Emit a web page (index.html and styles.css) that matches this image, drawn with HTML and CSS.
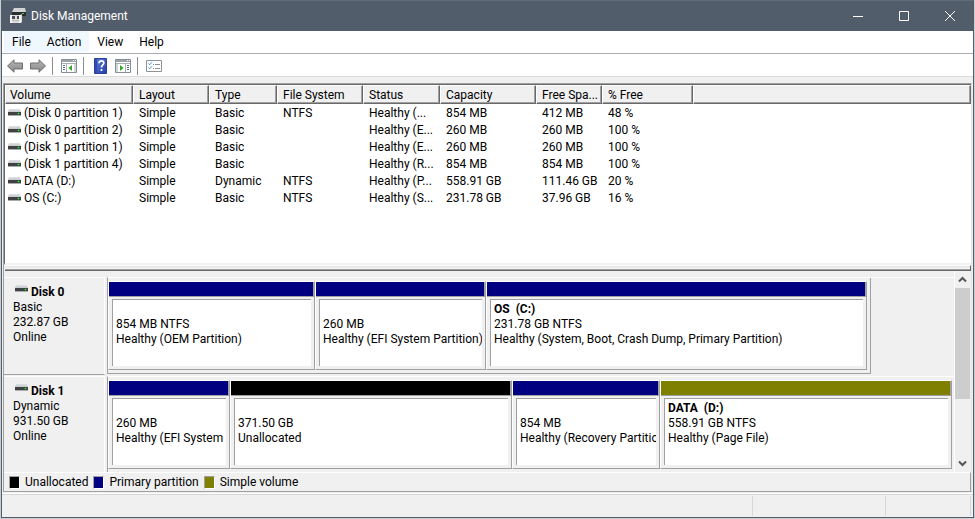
FILE: index.html
```
<!DOCTYPE html>
<html lang="en">
<head>
<meta charset="utf-8">
<title>Disk Management</title>
<link rel="stylesheet" href="styles.css">
</head>
<body>
<svg width="0" height="0" class="defs" aria-hidden="true">
  <defs>
    <linearGradient id="lid" x1="0" y1="0" x2="0" y2="1">
      <stop offset="0" stop-color="#dfe2e5"/><stop offset="1" stop-color="#c3c7cb"/>
    </linearGradient>
    <linearGradient id="arrow" x1="0" y1="0" x2="0" y2="1">
      <stop offset="0" stop-color="#b8b8b8"/><stop offset="1" stop-color="#858585"/>
    </linearGradient>
    <linearGradient id="help" x1="0" y1="0" x2="1" y2="1">
      <stop offset="0" stop-color="#5f7fe0"/><stop offset="1" stop-color="#2440a8"/>
    </linearGradient>
    <symbol id="drive" viewBox="0 0 13 7">
      <path d="M1 0h11l1 3H0z" fill="url(#lid)"/>
      <path d="M0 3h13v3H0z" fill="#3f4143"/>
      <path d="M0 6h13v1H0z" fill="#a9abad"/>
      <path d="M10 4h1v1h-1z" fill="#2fe03c"/><path d="M9 4h1v1H9zM11 4h1v1h-1zM10 3h1v1h-1zM10 5h1v1h-1z" fill="#2a7a34"/>
    </symbol>
  </defs>
</svg>
<main class="window">
  <header class="titlebar">
    <svg class="app-icon" viewBox="0 0 16 16" aria-hidden="true">
      <path d="M4 0h11l1 4H2z" fill="#d2d4d7"/>
      <path d="M2 4h14v4H2z" fill="#2b2d31"/>
      <path d="M12 5h2v1h-2z" fill="#2fe03c"/>
      <path d="M0 7h10l2-1v8l-1 1H0z" fill="#dcdcdc"/>
      <path d="M0 7h2v8H0zM9 7h2v8H9z" fill="#f4f4f4"/>
      <path d="M2 8h3v3H2zM7 8h2v3H7z" fill="#4a4d51"/>
      <path d="M2 12h7v1H2z" fill="#bcbcbc"/>
    </svg>
    <h1 class="title">Disk Management</h1>
    <button class="caption" aria-label="Minimize"><svg viewBox="0 0 10 10"><path d="M0 5.500h10" stroke="#fff"/></svg></button>
    <button class="caption" aria-label="Maximize"><svg viewBox="0 0 10 10"><path d="M.5.5h9v9h-9z" fill="none" stroke="#fff"/></svg></button>
    <button class="caption" aria-label="Close"><svg viewBox="0 0 10 10"><path d="M0 0l10 10M10 0L0 10" stroke="#fff"/></svg></button>
  </header>
  <nav class="menubar">
    <button class="menu lit">File</button>
    <button class="menu lit">Action</button>
    <button class="menu">View</button>
    <button class="menu">Help</button>
  </nav>
  <div class="toolbar">
    <button class="tool" aria-label="Back"><svg viewBox="0 0 16 14"><path d="M.5 7L7 .8v3.200h8.500v6H7v3.200z" fill="url(#arrow)" stroke="#6e6e6e"/></svg></button>
    <button class="tool" aria-label="Forward"><svg viewBox="0 0 16 14"><path d="M15.500 7L9 .8v3.200H.5v6H9v3.200z" fill="url(#arrow)" stroke="#6e6e6e"/></svg></button>
    <span class="divider"></span>
    <button class="tool" aria-label="Show or hide console tree"><svg viewBox="0 0 16 14"><path d="M.5.5h15v13H.5z" fill="#fff" stroke="#868d94"/><path d="M1 1h14v2H1z" fill="#9ba2aa"/><path d="M12 1h1v1h-1zM14 1h1v1h-1z" fill="#fff"/><path d="M1 4.500h14M5.500 5v8" stroke="#a8aeb4"/><path d="M2 6.500h2M2 8.500h2M2 10.500h2" stroke="#4d6f9b"/><path d="M13 5h2v8h-2z" fill="#d3d6da"/><path d="M11 6v6L7.500 9z" fill="#38a32c"/></svg></button>
    <span class="divider"></span>
    <button class="tool" aria-label="Help"><svg class="tall" viewBox="0 0 13 16"><path d="M.5.5h12v15H.5z" fill="url(#help)" stroke="#2b4096"/><path d="M1 1h2v14H1z" fill="#2f4bb0"/><path d="M5 5.200c0-3.200 4.800-3 4.800-.2 0 2-2.300 2-2.300 4.500M7.500 11v2" fill="none" stroke="#fff" stroke-width="1.700"/></svg></button>
    <button class="tool" aria-label="Show or hide action pane"><svg viewBox="0 0 16 14"><path d="M.5.5h15v13H.5z" fill="#fff" stroke="#868d94"/><path d="M1 1h14v2H1z" fill="#9ba2aa"/><path d="M12 1h1v1h-1zM14 1h1v1h-1z" fill="#fff"/><path d="M1 4.500h14M10.500 5v8" stroke="#a8aeb4"/><path d="M12 6.500h2M12 8.500h2M12 10.500h2" stroke="#4d6f9b"/><path d="M1 5h2v8H1z" fill="#d3d6da"/><path d="M5 6v6l3.500-3z" fill="#38a32c"/></svg></button>
    <span class="divider"></span>
    <button class="tool" aria-label="Properties"><svg class="flat" viewBox="0 0 16 12"><path d="M.5.5h15v11H.5z" fill="#fff" stroke="#8d9298"/><path d="M2.500 3.500l1.200 1.200L6 2.300M2.500 7.500l1.200 1.200L6 6.300" fill="none" stroke="#2d8be0"/><path d="M7 4.500h1M9 4.500h5M7 8.500h1M9 8.500h5" stroke="#8a8f95"/></svg></button>
  </div>
  <section class="console">
    <div class="list">
      <table class="volumes">
        <colgroup><col class="c-volume"><col class="c-layout"><col class="c-type"><col class="c-fs"><col class="c-status"><col class="c-capacity"><col class="c-free"><col class="c-percent"><col></colgroup>
        <thead><tr><th>Volume</th><th>Layout</th><th>Type</th><th>File System</th><th>Status</th><th>Capacity</th><th>Free Spa...</th><th>% Free</th><th></th></tr></thead>
        <tbody>
          <tr><td><svg class="drive"><use href="#drive"/></svg>(Disk 0 partition 1)</td><td>Simple</td><td>Basic</td><td>NTFS</td><td>Healthy (...</td><td>854 MB</td><td>412 MB</td><td>48 %</td><td></td></tr>
          <tr><td><svg class="drive"><use href="#drive"/></svg>(Disk 0 partition 2)</td><td>Simple</td><td>Basic</td><td></td><td>Healthy (E...</td><td>260 MB</td><td>260 MB</td><td>100 %</td><td></td></tr>
          <tr><td><svg class="drive"><use href="#drive"/></svg>(Disk 1 partition 1)</td><td>Simple</td><td>Basic</td><td></td><td>Healthy (E...</td><td>260 MB</td><td>260 MB</td><td>100 %</td><td></td></tr>
          <tr><td><svg class="drive"><use href="#drive"/></svg>(Disk 1 partition 4)</td><td>Simple</td><td>Basic</td><td></td><td>Healthy (R...</td><td>854 MB</td><td>854 MB</td><td>100 %</td><td></td></tr>
          <tr><td><svg class="drive"><use href="#drive"/></svg>DATA (D:)</td><td>Simple</td><td>Dynamic</td><td>NTFS</td><td>Healthy (P...</td><td>558.91 GB</td><td>111.46 GB</td><td>20 %</td><td></td></tr>
          <tr><td><svg class="drive"><use href="#drive"/></svg>OS (C:)</td><td>Simple</td><td>Basic</td><td>NTFS</td><td>Healthy (S...</td><td>231.78 GB</td><td>37.96 GB</td><td>16 %</td><td></td></tr>
        </tbody>
      </table>
    </div>
    <div class="splitter"></div>
    <div class="graph">
      <div class="disks">
        <article class="disk">
          <div class="disk-label"><h2><svg class="drive"><use href="#drive"/></svg>Disk 0</h2><p>Basic</p><p>232.87 GB</p><p>Online</p></div>
          <div class="track">
            <div class="parts framed" style="width:90.2%;grid-template-columns:207fr 171fr 381fr">
              <div class="part primary"><div class="info"><p class="name"></p><p>854 MB NTFS</p><p>Healthy (OEM Partition)</p></div></div>
              <div class="part primary"><div class="info"><p class="name"></p><p>260 MB</p><p>Healthy (EFI System Partition)</p></div></div>
              <div class="part primary"><div class="info"><p class="name">OS&nbsp; (C:)</p><p>231.78 GB NTFS</p><p>Healthy (System, Boot, Crash Dump, Primary Partition)</p></div></div>
            </div>
          </div>
        </article>
        <article class="disk">
          <div class="disk-label"><h2><svg class="drive"><use href="#drive"/></svg>Disk 1</h2><p>Dynamic</p><p>931.50 GB</p><p>Online</p></div>
          <div class="track">
            <div class="parts" style="grid-template-columns:122fr 282fr 148fr 292fr">
              <div class="part primary"><div class="info"><p class="name"></p><p>260 MB</p><p>Healthy (EFI System</p></div></div>
              <div class="part unallocated"><div class="info"><p class="name"></p><p>371.50 GB</p><p>Unallocated</p></div></div>
              <div class="part primary"><div class="info"><p class="name"></p><p>854 MB</p><p>Healthy (Recovery Partition)</p></div></div>
              <div class="part simple"><div class="info"><p class="name">DATA&nbsp; (D:)</p><p>558.91 GB NTFS</p><p>Healthy (Page File)</p></div></div>
            </div>
          </div>
        </article>
      </div>
      <div class="scrollbar">
        <button class="arrow" aria-label="Scroll up"><svg viewBox="0 0 9 7"><path d="M1 5.500l3.500-3.500L8 5.500" fill="none" stroke="#555" stroke-width="2"/></svg></button>
        <div class="thumb"></div>
        <button class="arrow down" aria-label="Scroll down"><svg viewBox="0 0 9 7"><path d="M1 1.500l3.500 3.500L8 1.500" fill="none" stroke="#555" stroke-width="2"/></svg></button>
      </div>
    </div>
    <div class="legend">
      <span class="key"><i class="swatch unallocated"></i>Unallocated</span>
      <span class="key"><i class="swatch primary"></i>Primary partition</span>
      <span class="key"><i class="swatch simple"></i>Simple volume</span>
    </div>
  </section>
  <footer class="status"><span class="cell wide"></span><span class="cell"></span><span class="cell last"></span></footer>
</main>
</body>
</html>
```
FILE: styles.css
```
:root {
  --face: #f0f0f0;
  --shadow: #a0a0a0;
  --dark: #696969;
  --light: #e3e3e3;
  --primary: #000080;
  --simple: #808000;
  --unallocated: #000;
}
* { box-sizing: border-box; }
body {
  margin: 0;
  height: 100vh;
  padding: 0 1px 1px;
  background: #c9ced2;
  font: 12px/15px Roboto, "Open Sans", sans-serif;
  color: #000;
}
.defs { position: absolute; }
h1, h2, p { margin: 0; font-size: inherit; font-weight: inherit; }
button { padding: 0; border: 0; background: none; font: inherit; color: inherit; }
svg { display: block; }

.window {
  display: flex;
  flex-direction: column;
  height: 100%;
  border: 1px solid #525d6b;
  border-top-color: #5f6b79;
  background: var(--face);
}

/* Title bar */
.titlebar {
  display: flex;
  align-items: center;
  height: 30px;
  padding-left: 8px;
  background: #525d6b;
  color: #fff;
}
.app-icon { width: 16px; height: 16px; }
.title { flex: 1; padding-left: 5px; }
.caption { display: grid; place-items: center; width: 46px; height: 30px; }
.caption svg { width: 10px; height: 10px; }

/* Menu */
.menubar {
  display: flex;
  height: 23px;
  padding: 0 2px;
  background: #fff;
  border-bottom: 1px solid #a9adb5;
}
.menu { height: 21px; padding: 2px 8px 0; }
.lit { background: #f0f8ff; }

/* Toolbar */
.toolbar {
  display: flex;
  align-items: center;
  gap: 1px;
  height: 23px;
  padding: 2px 0 0 2px;
  background: #fff;
  border-bottom: 1px solid #dadada;
}
.tool { display: grid; place-items: center; width: 22px; height: 20px; }
.tool svg { width: 16px; height: 14px; }
.tool .tall { width: 13px; height: 16px; }
.tool .flat { height: 12px; }
.divider { width: 1px; height: 18px; margin: 0 4px 0 2px; background: #8c8c8c; }

/* Console */
.console {
  flex: 1;
  display: flex;
  flex-direction: column;
  min-height: 0;
  margin: 6px 1px 1px;
  border: 1px solid var(--shadow);
  border-right-color: var(--light);
}
.list {
  flex: 0 0 181px;
  overflow: hidden;
  background: #fff;
  border: solid var(--dark);
  border-width: 1px 0 2px 1px;
  border-bottom-color: var(--face);
}
.volumes { width: 100%; table-layout: fixed; border-collapse: separate; border-spacing: 0; }
.c-volume { width: 128px; }
.c-layout { width: 76px; }
.c-type { width: 68px; }
.c-fs { width: 86px; }
.c-status { width: 77px; }
.c-capacity { width: 96px; }
.c-free { width: 66px; }
.c-percent { width: 91px; }
.volumes th, .volumes td {
  height: 17px;
  padding: 2px 0 0 6px;
  overflow: hidden;
  text-align: left;
  font-weight: 400;
  white-space: nowrap;
}
.volumes th {
  height: 19px;
  padding-left: 5px;
  background: var(--face);
  border: 1px solid;
  border-color: #fff var(--dark) var(--dark) #fff;
  box-shadow: inset -1px -1px var(--shadow);
}
.volumes th:first-child { padding-left: 4px; }
.volumes td:first-child { padding-left: 3px; }
.drive { display: inline-block; width: 13px; height: 7px; margin-right: 3px; vertical-align: 1px; }
.splitter {
  height: 6px;
  margin-left: 1px;
  border: solid;
  border-width: 1px 1px 1px 0;
  border-color: #fff var(--dark) var(--dark);
  box-shadow: inset 0 -1px var(--shadow), inset 0 1px var(--light);
}

/* Disk graph */
.graph { flex: 1; display: flex; min-height: 0; }
.disks { flex: 1; min-width: 0; padding-top: 6px; overflow: hidden; border-right: 1px solid #fff; }
.disk { display: flex; height: 98px; margin-bottom: 1px; }
.disk-label {
  flex: none;
  width: 101px;
  padding: 7px 0 0 9px;
  border: solid;
  border-width: 1px 1px 1px 0;
  border-color: #fff #fff var(--shadow);
}
.disk-label h2 { font-weight: 700; }
.disk-label .drive { margin: 0 3px 0 2px; vertical-align: 4px; }
.track { flex: 1; min-width: 0; height: 97px; margin-left: 2px; border-left: 1px solid var(--shadow); border-top: 1px solid #fff; }
.parts { display: grid; height: 96px; padding: 3px 2px 3px 0; }
.framed { padding-right: 3px; border: solid var(--shadow); border-width: 0 1px 1px 0; }
.part {
  display: flex;
  flex-direction: column;
  min-width: 0;
  height: 89px;
  border: 1px solid;
  border-color: #fff var(--shadow) var(--shadow) #fff;
}
.part::before {
  content: "";
  flex: none;
  height: 14px;
  background: var(--fill);
  border: solid var(--shadow);
  border-width: 0 1px 1px 0;
}
.primary { --fill: var(--primary); }
.simple { --fill: var(--simple); }
.unallocated { --fill: var(--unallocated); }
.info {
  flex: 1;
  margin: 2px 3px 3px;
  padding: 2px 0 0 3px;
  background: #fff;
  border: solid var(--shadow);
  border-width: 1px 0 0 1px;
}
.info p { height: 15px; overflow: hidden; white-space: nowrap; }
.info .name { font-weight: 700; }

.scrollbar { display: flex; flex-direction: column; width: 16px; padding-right: 1px; }
.arrow { display: grid; place-items: center; height: 17px; }
.arrow svg { width: 9px; height: 7px; }
.thumb { height: 111px; background: #cdcdcd; }
.down { margin-top: auto; }

/* Legend */
.legend {
  display: flex;
  align-items: center;
  gap: 5px;
  height: 19px;
  padding-left: 5px;
  border-top: 1px solid #fff;
  border-right: 1px solid var(--shadow);
}
.key { display: flex; align-items: center; gap: 5px; }
.swatch {
  width: 11px;
  height: 13px;
  background: var(--fill);
  border: 1px solid;
  border-color: var(--shadow) #fff #fff var(--shadow);
}

/* Status bar */
.status { display: flex; height: 24px; padding: 2px 2px 1px 0; border-top: 1px solid #fff; box-shadow: inset 0 1px #d7d7d7; }
.cell { width: 133px; border-right: 1px solid #d7d7d7; }
.wide { flex: 1; }
.last { width: 85px; }
```
